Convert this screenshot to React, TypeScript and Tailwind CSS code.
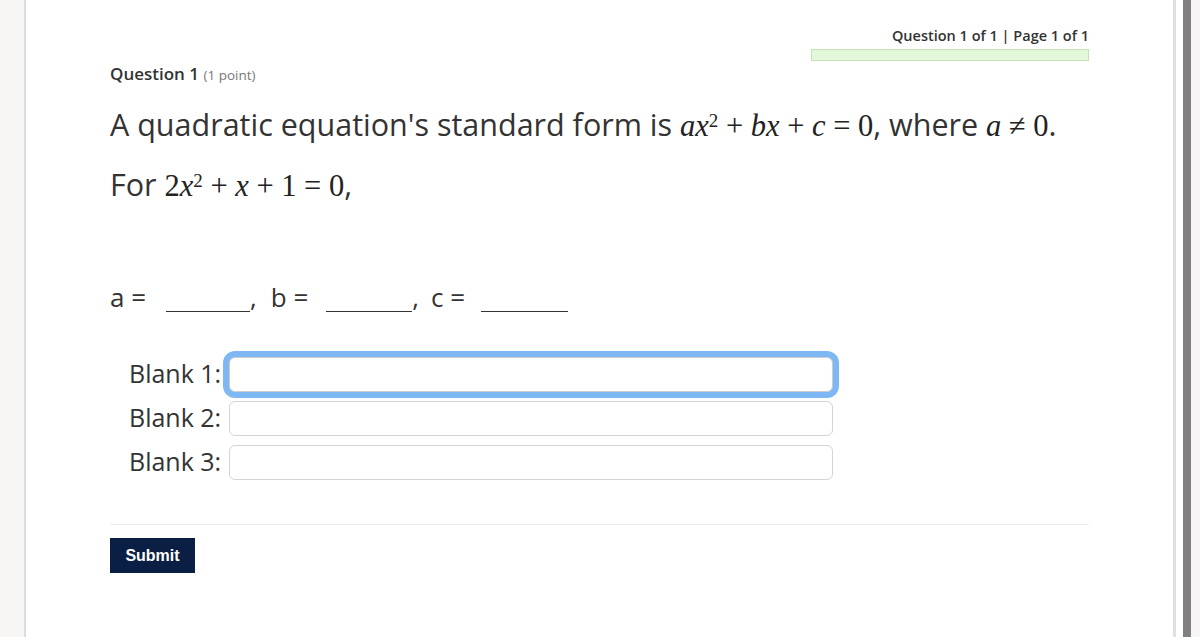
import React from "react";

const sans = { fontFamily: '"Open Sans", "Noto Sans", sans-serif' };
const serif = { fontFamily: '"Liberation Serif", "DejaVu Serif", serif' };

function M({ children }: { children: React.ReactNode }) {
  return (
    <span className="font-normal text-[#222]" style={serif}>
      {children}
    </span>
  );
}

function I({ children }: { children: React.ReactNode }) {
  return <i className="italic">{children}</i>;
}

function Line({ w, ml }: { w: string; ml: string }) {
  return <span className={`inline-block ${w} ${ml} border-b border-[#333] align-[-5px]`} />;
}

function Blank({ label, focused }: { label: string; focused?: boolean }) {
  return (
    <div className="flex items-center h-[44px]">
      <span className="w-[119px] shrink-0 whitespace-nowrap pl-[19px] text-[25px] text-[#333]">
        {label}
      </span>
      <div
        className={
          focused
            ? "w-[604px] h-[35px] rounded-[6px] border border-[#ccc] bg-white ring-[6px] ring-[#7db8f5]"
            : "w-[604px] h-[35px] rounded-[6px] border border-[#d4d4d4] bg-white"
        }
      />
    </div>
  );
}

export default function App() {
  return (
    <div className="flex h-[637px] w-[1200px] overflow-hidden bg-[#f8f6f5]" style={sans}>
      <div className="w-[24px] shrink-0" />
      <div className="w-[2px] shrink-0 bg-[#dcdcdc]" />

      {/* Quiz panel */}
      <div className="flex-1 bg-white pl-[84px] pr-[84px] pt-[26px]">
        <div className="flex flex-col items-end">
          <div className="text-[14.5px] font-semibold text-[#333] leading-[20px]">
            Question 1 of 1 | Page 1 of 1
          </div>
          <div className="mt-[3px] h-[12px] w-[278px] border border-[#c3e3b5] bg-[#e3f8da]" />
        </div>

        <div className="mt-[1px] text-[17px] leading-[24px] text-[#333]">
          <span className="font-semibold">Question 1</span>{" "}
          <span className="text-[13.5px] text-[#777]">(1 point)</span>
        </div>

        <div className="mt-[16px] text-[30.5px] font-medium leading-[42px] text-[#333]">
          A quadratic equation's standard form is{" "}
          <M>
            <I>ax</I>
            <sup className="text-[19px]">2</sup> + <I>bx</I> + <I>c</I> = 0
          </M>
          , where{" "}
          <M>
            <I>a</I> ≠ 0
          </M>
          .
        </div>
        <div className="mt-[16px] text-[30.5px] font-medium leading-[42px] text-[#333]">
          For{" "}
          <M>
            2<I>x</I>
            <sup className="text-[19px]">2</sup> + <I>x</I> + 1 = 0
          </M>
          ,
        </div>

        <div className="mt-[74px] text-[26px] leading-[32px] text-[#333] whitespace-nowrap">
          a =<Line w="w-[84px]" ml="ml-[20px]" />,<span className="ml-[14px]">b =</span>
          <Line w="w-[86px]" ml="ml-[18px]" />,<span className="ml-[12px]">c =</span>
          <Line w="w-[87px]" ml="ml-[16px]" />
        </div>

        <div className="mt-[39px] flex flex-col">
          <Blank label="Blank 1:" focused />
          <Blank label="Blank 2:" />
          <Blank label="Blank 3:" />
        </div>

        <div className="mt-[40px] h-px bg-[#ececec]" />

        <button
          className="mt-[13px] h-[35px] w-[85px] bg-[#0b1f45] text-[16px] font-bold text-white"
          style={{ fontFamily: '"Liberation Sans", Arial, sans-serif' }}
        >
          Submit
        </button>
      </div>

      {/* Right edge */}
      <div className="w-[3px] shrink-0 bg-[#e0e0e0]" />
      <div className="w-[7px] shrink-0 bg-white" />
      <div className="w-[8px] shrink-0 bg-[#808080]" />
      <div className="w-[9px] shrink-0 bg-[#f8f6f5]" />
    </div>
  );
}
